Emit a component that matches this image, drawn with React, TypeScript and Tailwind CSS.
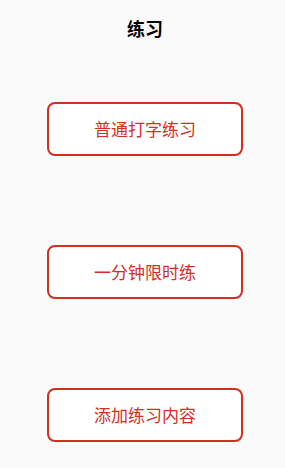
const items = ['普通打字练习', '一分钟限时练', '添加练习内容']

export default function App() {
  return (
    <div
      className="min-h-[468px] w-full overflow-hidden bg-[#fafafa]"
      style={{ fontFamily: '"Noto Sans CJK SC", "Noto Sans", sans-serif' }}
    >
      <div className="w-[290px]">
        <div className="flex h-[56px] items-center justify-center">
          <h1 className="text-[18px] font-bold text-black">练习</h1>
        </div>
        <div className="flex flex-col items-center gap-[89px] pt-[46px]">
          {items.map((label) => (
            <button
              key={label}
              className="flex h-[54px] w-[196px] items-center justify-center rounded-[8px] border-2 border-[#d32f1f] bg-white text-[17px] text-[#d32f1f]"
            >
              {label}
            </button>
          ))}
        </div>
      </div>
    </div>
  )
}
